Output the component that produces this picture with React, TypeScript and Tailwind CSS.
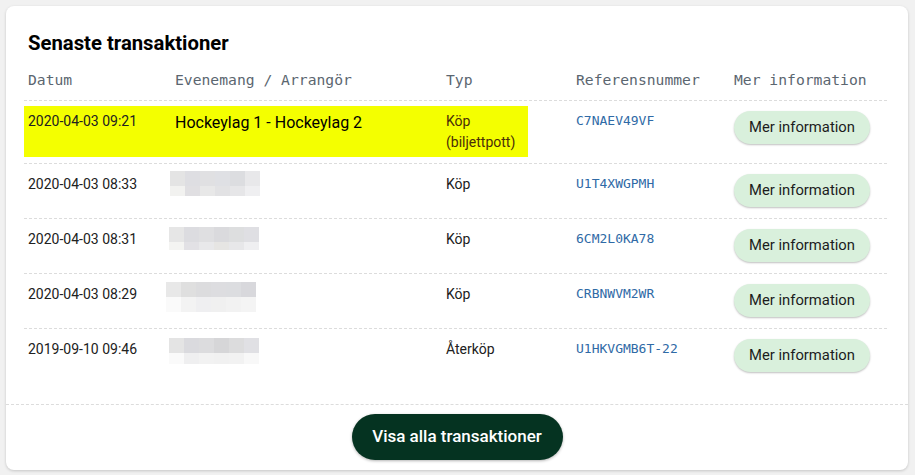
import React from "react";

type Row = {
  date: string;
  typ: string;
  typ2?: string;
  ref: string;
  blur?: { top: string[]; bottom: string[]; pos: string; bottomH: string };
};

const rows: Row[] = [
  { date: "2020-04-03 09:21", typ: "Köp", typ2: "(biljettpott)", ref: "C7NAEV49VF" },
  {
    date: "2020-04-03 08:33",
    typ: "Köp",
    ref: "U1T4XWGPMH",
    blur: {
      top: ["#e4e4e4", "#dedee2", "#e0e0e2", "#dfe0e4", "#dcdde0", "#e8e8ea"],
      bottom: ["#f2f2f0", "#e0dfe2", "#e8e8e8", "#e2e2e4", "#e6e6e8", "#efeff1"],
      pos: "-ml-[5px] -mt-[3px]",
      bottomH: "h-[10px]",
    },
  },
  {
    date: "2020-04-03 08:31",
    typ: "Köp",
    ref: "6CM2L0KA78",
    blur: {
      top: ["#e6e6e6", "#dcdce0", "#dfdfe1", "#dadadd", "#dddedf", "#dfdfe3"],
      bottom: ["#f4f4f2", "#e2e1e5", "#e8e8ea", "#e6e5e3", "#e7e7e9", "#efeff1"],
      pos: "-ml-[6px] -mt-[2px]",
      bottomH: "h-[8px]",
    },
  },
  {
    date: "2020-04-03 08:29",
    typ: "Köp",
    ref: "CRBNWVM2WR",
    blur: {
      top: ["#e8e8e8", "#dfdfdf", "#dcdcde", "#dddde0", "#dcdde0", "#d8d8dc"],
      bottom: ["#fafafa", "#f3f3f3", "#efeff1", "#f0f0f0", "#f2f2f2", "#f4f4f4"],
      pos: "-ml-[9px] -mt-[2px]",
      bottomH: "h-[15px]",
    },
  },
  {
    date: "2019-09-10 09:46",
    typ: "Återköp",
    ref: "U1HKVGMB6T-22",
    blur: {
      top: ["#e4e4e4", "#dadade", "#dcdcde", "#d6d6d8", "#dcdcdd", "#e0e0e4"],
      bottom: ["#fafafa", "#efeff0", "#f2f2f2", "#f1f1f1", "#f2f2f2", "#f8f8f8"],
      pos: "-ml-[6px] -mt-[1px]",
      bottomH: "h-[11px]",
    },
  },
];

const cols = "grid grid-cols-[147px_271px_130px_158px_157px]";

const Blurred = ({ blur }: { blur: NonNullable<Row["blur"]> }) => (
  <div className={`flex flex-col w-[90px] ${blur.pos}`}>
    <div className="flex">
      {blur.top.map((c, i) => (
        <div key={i} className="w-[15px] h-[15px]" style={{ backgroundColor: c }} />
      ))}
    </div>
    <div className="flex">
      {blur.bottom.map((c, i) => (
        <div key={i} className={`w-[15px] ${blur.bottomH}`} style={{ backgroundColor: c }} />
      ))}
    </div>
  </div>
);

export default function App() {
  return (
    <div className="w-[915px] h-[475px] bg-[#f1f1f1] pt-[6px] pl-[6px] font-['Roboto',sans-serif] text-[#212121]">
      <div className="w-[902px] h-[464px] bg-white rounded-lg shadow-[0_1px_3px_rgba(0,0,0,0.18)] flex flex-col">
        <div className="pl-[18px] pt-[23px] pb-[21px]">
          <h2 className="pl-1 text-[20.3px] leading-7 font-bold text-black">Senaste transaktioner</h2>

          <div className={`${cols} mt-[13px] pb-[10px] font-['DejaVu_Sans_Mono',monospace] text-[14.7px] leading-5 text-[#5b6670]`}>
            <div className="pl-1">Datum</div>
            <div className="pl-1">Evenemang / Arrangör</div>
            <div className="pl-1">Typ</div>
            <div className="pl-1">Referensnummer</div>
            <div className="pl-1">Mer information</div>
          </div>

          {rows.map((r, i) => (
            <div
              key={i}
              className={`${cols} relative border-t border-dashed border-[#dcdcdc] pt-[10px] w-[863px] ${i === 0 ? "pb-[10px]" : "pb-[11px]"}`}
            >
              {i === 0 && <div className="absolute left-0 top-[5px] bottom-[6px] w-[504px] bg-[#f4ff00]" />}
              <div className="relative pl-1 text-[14px] leading-5">{r.date}</div>
              <div className="relative pl-1">
                {r.blur ? (
                  <Blurred blur={r.blur} />
                ) : (
                  <span className="text-[16px] leading-5 text-black">Hockeylag 1 - Hockeylag 2</span>
                )}
              </div>
              <div className={`relative pl-1 text-[14px] leading-[21px] ${i === 0 ? "text-[#4a2e08]" : ""}`}>
                <div>{r.typ}</div>
                {r.typ2 && <div>{r.typ2}</div>}
              </div>
              <div className="relative pl-1 font-['DejaVu_Sans_Mono',monospace] text-[13px] leading-5 text-[#2f6aa6]">
                {r.ref}
              </div>
              <div className="relative pl-1">
                <button className="h-[33px] w-[136px] rounded-full bg-[#d9f0dc] text-[14.8px] text-[#1c1c1c] shadow-[0_1px_2px_rgba(0,0,0,0.25)]">
                  Mer information
                </button>
              </div>
            </div>
          ))}
        </div>

        <div className="border-t border-dashed border-[#dcdcdc] flex justify-center pt-[9px]">
          <button className="h-[46px] w-[211px] rounded-full bg-[#053321] text-white text-[17px] font-medium shadow-[0_1px_3px_rgba(0,0,0,0.3)]">
            Visa alla transaktioner
          </button>
        </div>
      </div>
    </div>
  );
}
